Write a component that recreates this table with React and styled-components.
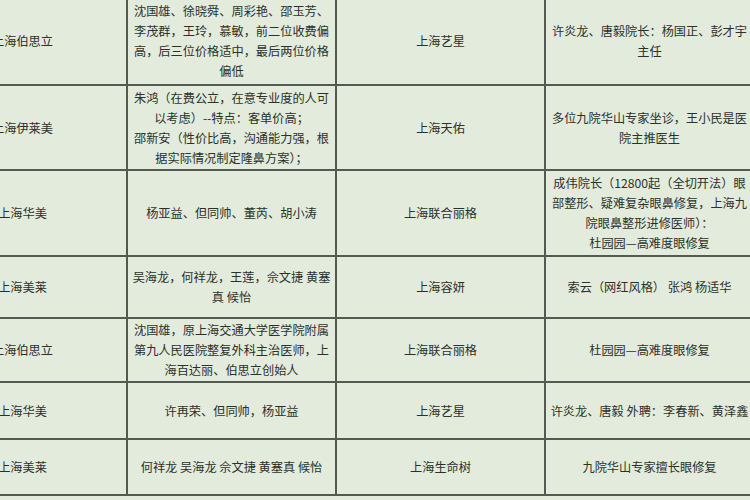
import styled, { createGlobalStyle } from 'styled-components'

const GlobalStyle = createGlobalStyle`
  html, body {
    margin: 0;
    padding: 0;
    background: #e2ebdc;
    overflow: hidden;
  }
  body {
    font-family: "Noto Sans CJK SC", "Noto Sans", sans-serif;
  }
`

// ===================================

const Page = styled.div`
  width: 750px;
  height: 500px;
  overflow: hidden;
  background: #e2ebdc;
`

const Table = styled.div`
  display: grid;
  grid-template-columns: repeat(4, 209px);
  margin: -4px 0 0 -81px;
  border-top: 2px solid #535a51;
`

const Cell = styled.div`
  height: ${(p) => p.$h}px;
  box-sizing: border-box;
  border-right: 2px solid #535a51;
  border-bottom: 2px solid #535a51;
  display: flex;
  flex-direction: column;
  justify-content: center;
  align-items: center;
  overflow: visible;
  padding: 0 2px;
  color: #2c302b;
  font-size: 12.2px;
  line-height: 20px;
  text-align: center;
  white-space: nowrap;
`

const Line = styled.span`
  display: block;
`

// ===================================

const rows = [
  {
    h: 88,
    cells: [
      ['上海伯思立'],
      [
        '沈国雄、徐晓舜、周彩艳、邵玉芳、',
        '李茂群，王玲，慕敏，前二位收费偏',
        '高，后三位价格适中，最后两位价格',
        '偏低',
      ],
      ['上海艺星'],
      ['许炎龙、唐毅院长：杨国正、彭才宇', '主任'],
    ],
  },
  {
    h: 85,
    cells: [
      ['上海伊莱美'],
      [
        '朱鸿（在费公立，在意专业度的人可',
        '以考虑）--特点：客单价高；',
        '邵新安（性价比高，沟通能力强，根',
        '据实际情况制定隆鼻方案）；',
      ],
      ['上海天佑'],
      ['多位九院华山专家坐诊，王小民是医', '院主推医生'],
    ],
  },
  {
    h: 86,
    cells: [
      ['上海华美'],
      ['杨亚益、但同帅、董芮、胡小涛'],
      ['上海联合丽格'],
      [
        '成伟院长（12800起（全切开法）眼',
        '部整形、疑难复杂眼鼻修复，上海九',
        '院眼鼻整形进修医师）：',
        '杜园园—高难度眼修复',
      ],
    ],
  },
  {
    h: 62,
    cells: [
      ['上海美莱'],
      ['吴海龙，何祥龙，王莲，佘文捷 黄塞', '真 候怡'],
      ['上海容妍'],
      ['索云（网红风格） 张鸿  杨适华'],
    ],
  },
  {
    h: 64,
    cells: [
      ['上海伯思立'],
      [
        '沈国雄，原上海交通大学医学院附属',
        '第九人民医院整复外科主治医师，上',
        '海百达丽、伯思立创始人',
      ],
      ['上海联合丽格'],
      ['杜园园—高难度眼修复'],
    ],
  },
  {
    h: 57,
    cells: [
      ['上海华美'],
      ['许再荣、但同帅，杨亚益'],
      ['上海艺星'],
      ['许炎龙、唐毅 外聘：李春新、黄泽鑫'],
    ],
  },
  {
    h: 56,
    cells: [
      ['上海美莱'],
      ['何祥龙 吴海龙 佘文捷 黄塞真 候怡'],
      ['上海生命树'],
      ['九院华山专家擅长眼修复'],
    ],
  },
]

const App = () => {
  return (
    <Page>
      <GlobalStyle />
      <Table>
        {rows.map((row, ri) =>
          row.cells.map((lines, ci) => (
            <Cell key={`${ri}-${ci}`} $h={row.h}>
              {lines.map((text, li) => (
                <Line key={li}>{text}</Line>
              ))}
            </Cell>
          ))
        )}
      </Table>
    </Page>
  )
}

export default App
